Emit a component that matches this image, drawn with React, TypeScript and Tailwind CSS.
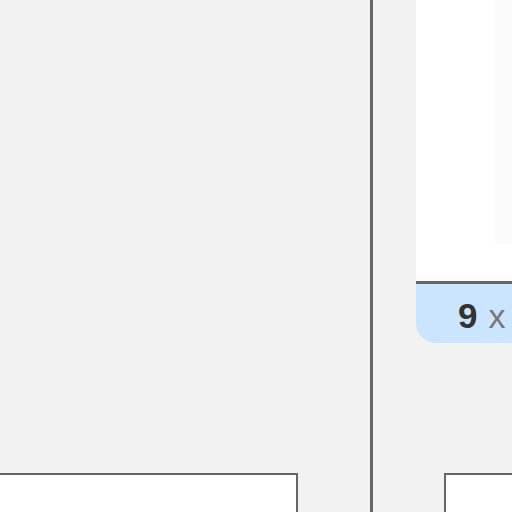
export default function App() {
  return (
    <div className="flex h-[512px] w-[512px] overflow-hidden bg-[#f2f2f2]" style={{ fontFamily: '"Liberation Sans", Arial, sans-serif' }}>
      <div className="flex w-[370px] shrink-0 flex-col pt-[473px]">
        <div className="h-[80px] w-[298px] shrink-0 border-r-2 border-t-2 border-[#666] bg-white" />
      </div>
      <div className="w-[3px] shrink-0 bg-[#666]" />
      <div className="flex min-w-0 flex-1 flex-col">
        <div className="ml-[43px] flex shrink-0 flex-col">
          <div className="flex h-[281px] justify-end bg-white">
            <div className="h-[245px] w-[17px] bg-[#fbfbfb]" />
          </div>
          <div className="h-[3px] bg-[#666]" />
          <div className="flex h-[59px] items-center rounded-bl-[20px] bg-[#cce5ff] pl-[42px] pt-[4px]">
            <span className="text-[35px] font-bold leading-none text-[#333]">9</span>
            <span className="ml-[11px] text-[34px] leading-none text-[#777]">x</span>
          </div>
        </div>
        <div className="ml-[71px] mt-[130px] h-[80px] shrink-0 border-l-2 border-t-2 border-[#666] bg-white" />
      </div>
    </div>
  );
}
